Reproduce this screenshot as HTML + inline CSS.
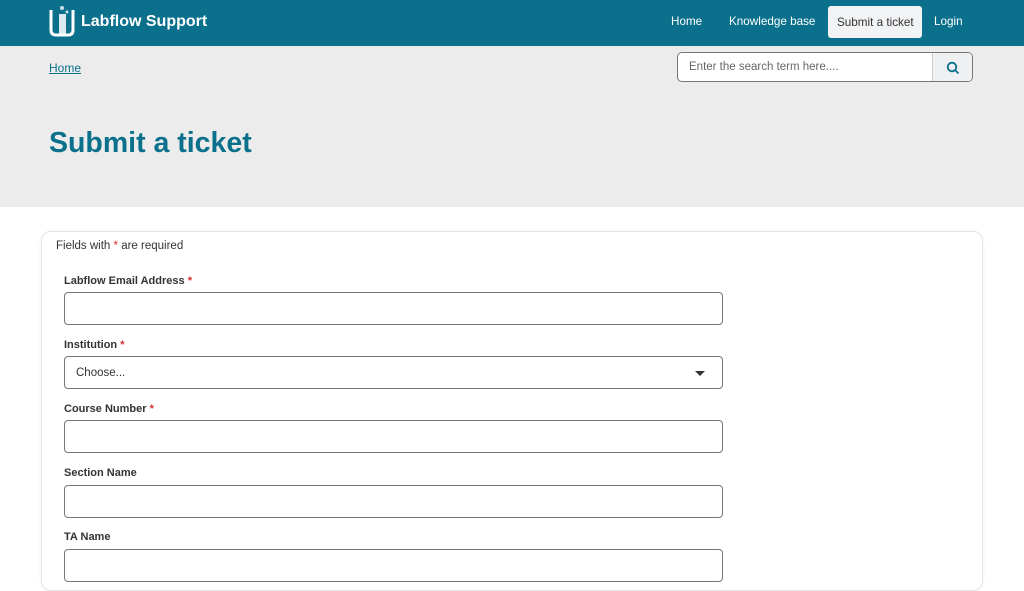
<!DOCTYPE html>
<html><head><style>
*{box-sizing:border-box;margin:0;padding:0}
body{width:1024px;height:574px;overflow:hidden;background:#fff;font-family:"Liberation Sans",Arial,sans-serif;color:#222;position:relative}
.hdr{position:absolute;left:0;top:0;width:1024px;height:46px;background:#0a708c}
.brand{position:absolute;left:81px;top:13px;color:#fff;font-weight:bold;font-size:16px}
.nav{position:absolute;top:15px;color:#fff;font-size:11.7px}
.band{position:absolute;left:0;top:46px;width:1024px;height:161px;background:#ececec}
.crumb{position:absolute;left:49px;top:61px;font-size:12px;color:#0a708c;text-decoration:underline}
.search{position:absolute;left:677px;top:52px;width:296px;height:30px;border:1px solid #777;border-radius:5px;background:#fff;overflow:hidden}
.search span{position:absolute;left:11px;top:8px;font-size:11.5px;color:#666}
.search .btn{position:absolute;right:0;top:0;width:40px;height:30px;background:#eef0f2;border-left:1px solid #ccc}
h1{position:absolute;left:49px;top:127px;font-size:28.5px;color:#0a708c;font-weight:bold}
.card{position:absolute;left:41px;top:231px;width:942px;height:360px;border:1px solid #e6e6e6;border-radius:10px;box-shadow:0 0 3px rgba(0,0,0,.06)}
.req{position:absolute;left:56px;top:240px;font-size:11.5px;color:#333}
.r{color:#d42a2a}
.lbl{position:absolute;left:64px;font-size:11px;font-weight:bold;color:#333}
.in{position:absolute;left:64px;width:659px;height:33px;border:1px solid #777;border-radius:4px;background:#fff}
</style></head><body>
<div class="hdr">
<svg style="position:absolute;left:48px;top:4px" width="28" height="33" viewBox="0 0 28 33"><path d="M3 6v20q0 5 5 5h12q5 0 5-5V6" fill="none" stroke="#fff" stroke-width="3"/><rect x="11" y="10" width="7" height="20" fill="#fff" opacity=".85"/><circle cx="14" cy="4" r="2" fill="#cde"/><circle cx="19" cy="8" r="1.5" fill="#cde"/></svg>
<div class="brand">Labflow Support</div>
<div class="nav" style="left:671px">Home</div>
<div class="nav" style="left:729px">Knowledge base</div>
<div style="position:absolute;left:828px;top:6px;width:94px;height:32px;background:#f1f3f5;border-radius:3px;color:#333;font-size:11.7px;padding:10px 0 0 9px">Submit a ticket</div>
<div class="nav" style="left:934px">Login</div>
</div>
<div class="band"></div>
<div class="crumb">Home</div>
<div class="search"><span>Enter the search term here....</span><div class="btn"><svg style="position:absolute;left:13px;top:8px" width="14" height="14" viewBox="0 0 14 14"><circle cx="6" cy="6" r="4.3" fill="none" stroke="#0a708c" stroke-width="1.8"/><path d="M9 9l3.5 3.5" stroke="#0a708c" stroke-width="1.8"/></svg></div></div>
<h1>Submit a ticket</h1>
<div class="card"></div>
<div class="req">Fields with <span class="r">*</span> are required</div>
<div class="lbl" style="top:275px">Labflow Email Address <span class="r">*</span></div>
<div class="in" style="top:292px"></div>
<div class="lbl" style="top:339px">Institution <span class="r">*</span></div>
<div class="in" style="top:356px"><span style="position:absolute;left:11px;top:10px;font-size:11.5px;color:#333">Choose...</span><span style="position:absolute;right:17px;top:14px;border-left:5px solid transparent;border-right:5px solid transparent;border-top:5px solid #333"></span></div>
<div class="lbl" style="top:403px">Course Number <span class="r">*</span></div>
<div class="in" style="top:420px"></div>
<div class="lbl" style="top:467px">Section Name</div>
<div class="in" style="top:485px"></div>
<div class="lbl" style="top:531px">TA Name</div>
<div class="in" style="top:549px"></div>
</body></html>
